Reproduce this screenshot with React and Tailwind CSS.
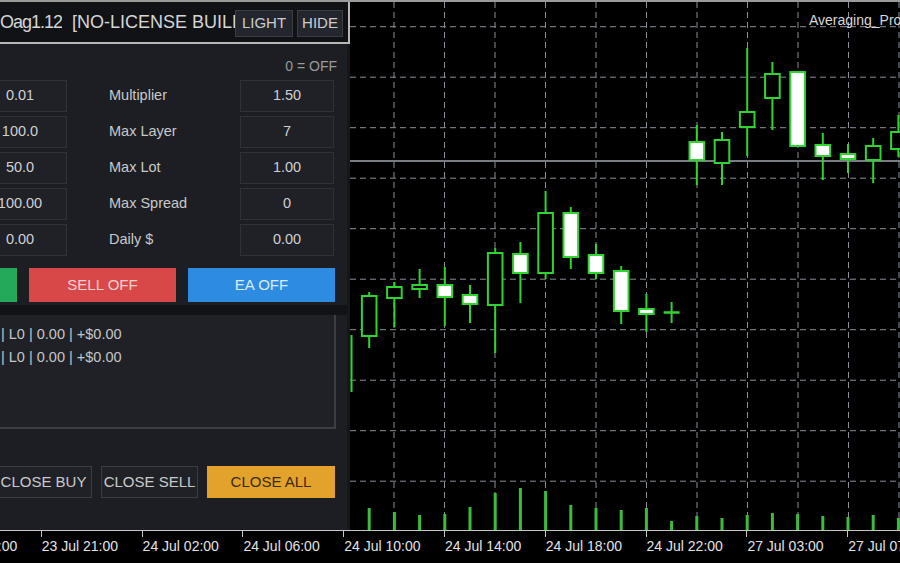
import React from "react";

const ROWS = [
  { left: "0.01", label: "Multiplier", right: "1.50" },
  { left: "100.0", label: "Max Layer", right: "7" },
  { left: "50.0", label: "Max Lot", right: "1.00" },
  { left: "100.00", label: "Max Spread", right: "0" },
  { left: "0.00", label: "Daily $", right: "0.00" },
];

const TIMES = [
  "23 Jul 17:00", "23 Jul 21:00", "24 Jul 02:00", "24 Jul 06:00", "24 Jul 10:00",
  "24 Jul 14:00", "24 Jul 18:00", "24 Jul 22:00", "27 Jul 03:00", "27 Jul 07:00",
];

// [open/close top, bottom, high, low, filled]
const CANDLES = [
  [296, 336, 292, 348, false],
  [287, 298, 282, 327, false],
  [285, 289, 269, 298, false],
  [285, 297, 267, 326, true],
  [295, 304, 285, 323, true],
  [253, 305, 248, 353, false],
  [254, 273, 242, 303, true],
  [213, 273, 191, 279, false],
  [213, 257, 207, 269, true],
  [255, 273, 244, 279, true],
  [271, 311, 266, 324, true],
  [309, 314, 294, 332, true],
  [312.5, 312.5, 302, 323, true],
  [142, 160, 125, 185, true],
  [140, 163, 132, 185, false],
  [112, 127, 48, 156, false],
  [74, 98, 62, 130, false],
  [72, 146, 72, 147, true],
  [145, 156, 133, 180, true],
  [154, 159, 144, 173, true],
  [146, 160, 138, 183, false],
  [132, 149, 115, 157, false],
];

const VOLUMES = [508, 512, 515, 514, 507, 493, 488, 491, 505, 508, 510, 508, 521, 516, 518, 515, 513, 514, 516, 517, 515, 518];

const GREEN = "#30d430";

function Chart() {
  const vx = Array.from({ length: 11 }, (_, i) => 394 + 50.5 * i);
  const hy = Array.from({ length: 10 }, (_, i) => 26.7 + 50.5 * i);
  return (
    <svg className="block w-[550px] h-[528px]" viewBox="350 2 550 528">
      {vx.map((x) => (
        <line key={"v" + x} x1={x} x2={x} y1={2} y2={530} stroke="#8a8f98" strokeWidth="1" strokeDasharray="6 4" />
      ))}
      {hy.map((y) => (
        <line key={"h" + y} x1={350} x2={900} y1={y} y2={y} stroke="#8a8f98" strokeWidth="1" strokeDasharray="6 4" />
      ))}
      <line x1={350} x2={900} y1={161} y2={161} stroke="#a2a6ad" strokeWidth="1.5" />

      {VOLUMES.map((top, i) => {
        const cx = 369.2 + 25.2 * i;
        return <rect key={"vol" + i} x={cx - 1.5} y={top} width="3" height={530 - top} fill="#3cbc3c" />;
      })}

      <line x1={351.5} x2={351.5} y1={335} y2={392} stroke={GREEN} strokeWidth="2" />
      {CANDLES.map(([t, b, hi, lo, filled], i) => {
        const cx = 369.2 + 25.2 * i;
        return (
          <g key={"c" + i}>
            <line x1={cx} x2={cx} y1={hi} y2={lo} stroke={GREEN} strokeWidth="2" />
            {b - t < 1 ? (
              <line x1={cx - 8} x2={cx + 8} y1={t} y2={t} stroke={GREEN} strokeWidth="2.5" />
            ) : (
              <rect x={cx - 7.3} y={t} width="14.6" height={b - t} fill={filled ? "#ffffff" : "#000000"} stroke={GREEN} strokeWidth="2" />
            )}
          </g>
        );
      })}

      <text x={809} y={25} fill="#d9d9d9" fontSize="14" fontFamily="'Liberation Sans', Arial, sans-serif">
        Averaging_Pro
      </text>
    </svg>
  );
}

function Panel() {
  return (
    <div className="w-[350px] shrink-0 flex flex-col overflow-hidden">
      <div className="h-[42px] shrink-0 flex items-center bg-[#111215] border-r-2 border-b-2 border-[#b8b8b8] pr-[5px]">
        <div className="flex-1 flex items-center overflow-hidden whitespace-nowrap text-[18px] text-[#d6d6d6]">
          <span className="w-[62px] shrink-0 overflow-hidden flex justify-end tracking-[-1px]">Oag1.12</span>
          <span className="ml-[10px]">[NO-LICENSE BUILD]</span>
        </div>
        <div className="flex gap-[4px] mt-[3px]">
          <div className="w-[58px] h-[27px] flex items-center justify-center bg-[#23262c] border border-[#3a3d44] text-[15px] text-[#cdcdcd]">LIGHT</div>
          <div className="w-[46px] h-[27px] flex items-center justify-center bg-[#23262c] border border-[#3a3d44] text-[15px] text-[#cdcdcd]">HIDE</div>
        </div>
      </div>

      <div className="flex-1 flex flex-col bg-[#1c1e23] border-r-[3px] border-[#16171b] pt-[14px]">
        <div className="h-[17px] leading-[17px] text-right pr-[10px] text-[14px] text-[#9b9b9b]">0 = OFF</div>

        <div className="mt-[5px] flex flex-col gap-[4px]">
          {ROWS.map((r) => (
            <div key={r.label} className="flex items-center h-[32px] text-[14.5px]">
              <div className="w-[94px] -ml-[27px] h-full shrink-0 flex items-center justify-center bg-[#1f2127] border border-[#2e3137] text-[#d0d0d0]">
                {r.left}
              </div>
              <div className="flex-1 pl-[42px] text-[#c9c9c9]">{r.label}</div>
              <div className="w-[94px] h-full shrink-0 mr-[13px] flex items-center justify-center bg-[#1f2127] border border-[#2e3137] text-[#d0d0d0]">
                {r.right}
              </div>
            </div>
          ))}
        </div>

        <div className="mt-[12px] h-[34px] flex gap-[12px] -ml-[130px] text-[15px]">
          <div className="w-[147px] shrink-0 bg-[#24a85a]" />
          <div className="w-[147px] shrink-0 flex items-center justify-center bg-[#d94848] text-[#f7d2d2]">SELL OFF</div>
          <div className="w-[147px] shrink-0 flex items-center justify-center bg-[#2e8ce0] text-[#d8ebfc]">EA OFF</div>
        </div>

        <div className="mt-[3px] h-[10px] bg-[#121317]" />

        <div className="h-[114px] w-[346px] -ml-[10px] bg-[#1f2127] border-r-2 border-b-2 border-[#3b3e45] pt-[8px] pl-[11px] text-[14.5px] leading-[23px] text-[#c6c6c6]">
          <div>| L0 | 0.00 | +$0.00</div>
          <div>| L0 | 0.00 | +$0.00</div>
        </div>

        <div className="mt-[37px] h-[32px] flex gap-[9px] -ml-[5px] text-[15px]">
          <div className="w-[97px] shrink-0 flex items-center justify-center bg-[#1f2127] border border-[#3a3d45] text-[#cbcbcb] whitespace-nowrap overflow-hidden">CLOSE BUY</div>
          <div className="w-[97px] shrink-0 flex items-center justify-center bg-[#1f2127] border border-[#3a3d45] text-[#cbcbcb] whitespace-nowrap overflow-hidden">CLOSE SELL</div>
          <div className="w-[128px] shrink-0 flex items-center justify-center bg-[#e3a22b] text-[#3a2a10]">CLOSE ALL</div>
        </div>
      </div>
    </div>
  );
}

export default function App() {
  return (
    <div className="w-[900px] h-[563px] overflow-hidden bg-black flex flex-col border-t-2 border-[#9a9a9a] font-['Liberation_Sans',Arial,sans-serif]">
      <div className="h-[528px] shrink-0 flex">
        <Panel />
        <div className="flex-1 overflow-hidden">
          <Chart />
        </div>
      </div>
      <div className="flex-1 flex border-t border-[#c8c8c8] -ml-[60px]">
        {TIMES.map((t) => (
          <div key={t} className="w-[100.8px] shrink-0 flex flex-col">
            <div className="w-px h-[6px] bg-[#c8c8c8]" />
            <div className="mt-[1px] pl-[1px] text-[14px] leading-[16px] text-[#e4e4e4] whitespace-nowrap">{t}</div>
          </div>
        ))}
      </div>
    </div>
  );
}
